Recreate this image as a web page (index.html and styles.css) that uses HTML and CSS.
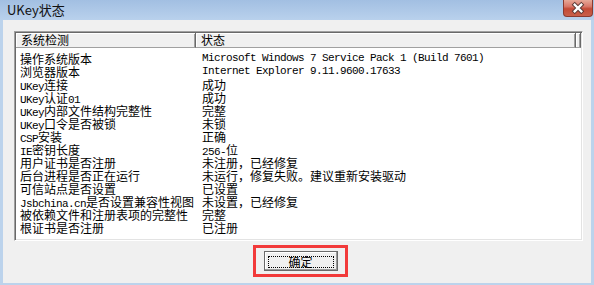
FILE: index.html
```html
<!DOCTYPE html>
<html lang="zh-CN">
<head>
<meta charset="utf-8">
<title>UKey状态</title>
<link rel="stylesheet" href="styles.css">
</head>
<body>
<div class="window">
  <div class="titlebar">
    <div class="title">UKey状态</div>
    <div class="close">
      <svg width="30" height="16" viewBox="0 0 30 16">
        <path d="M11.5 4.5 L18.5 11.5 M18.5 4.5 L11.5 11.5" stroke="#5a3a36" stroke-width="4.6" stroke-linecap="square"/>
        <path d="M11.5 4.5 L18.5 11.5 M18.5 4.5 L11.5 11.5" stroke="#ffffff" stroke-width="2.6" stroke-linecap="square"/>
      </svg>
    </div>
  </div>
  <div class="frame">
    <div class="list">
      <div class="header">
        <div class="hcell c1">系统检测</div>
        <div class="hcell c2">状态</div>
        <div class="hcell c3"></div>
      </div>
      <div class="rows">
        <div class="row"><span>操作系统版本</span><span class="m">Microsoft Windows 7 Service Pack 1 (Build 7601)</span></div>
        <div class="row"><span>浏览器版本</span><span class="m">Internet Explorer 9.11.9600.17633</span></div>
        <div class="row"><span><span class="m">UKey</span>连接</span><span>成功</span></div>
        <div class="row"><span><span class="m">UKey</span>认证<span class="m">01</span></span><span>成功</span></div>
        <div class="row"><span><span class="m">UKey</span>内部文件结构完整性</span><span>完整</span></div>
        <div class="row"><span><span class="m">UKey</span>口令是否被锁</span><span>未锁</span></div>
        <div class="row"><span><span class="m">CSP</span>安装</span><span>正确</span></div>
        <div class="row"><span><span class="m">IE</span>密钥长度</span><span><span class="m">256-</span>位</span></div>
        <div class="row"><span>用户证书是否注册</span><span>未注册，已经修复</span></div>
        <div class="row"><span>后台进程是否正在运行</span><span>未运行，修复失败。建议重新安装驱动</span></div>
        <div class="row"><span>可信站点是否设置</span><span>已设置</span></div>
        <div class="row"><span><span class="m">Jsbchina.cn</span>是否设置兼容性视图</span><span>未设置，已经修复</span></div>
        <div class="row"><span>被依赖文件和注册表项的完整性</span><span>完整</span></div>
        <div class="row"><span>根证书是否注册</span><span>已注册</span></div>
      </div>
    </div>
    <div class="actions">
      <div class="highlight">
        <button class="btn" type="button"><span class="focus">确定</span></button>
      </div>
    </div>
  </div>
</div>
</body>
</html>
```
FILE: styles.css
```css
* { box-sizing: border-box; margin: 0; padding: 0; }
html, body { width: 594px; height: 285px; overflow: hidden; }
body {
  font-family: "Noto Sans CJK SC", sans-serif;
  font-size: 12px;
  color: #000;
  background: #f0f0f0;
}
.window {
  width: 594px;
  height: 285px;
  display: flex;
  flex-direction: column;
}
.titlebar {
  height: 20px;
  flex: none;
  display: flex;
  justify-content: space-between;
  align-items: flex-start;
  background: linear-gradient(to bottom, #a2bfe2, #b9d1ec);
}
.title {
  padding-left: 7px;
  line-height: 20px;
  font-size: 13px;
  color: #111;
}
.close {
  width: 30px;
  height: 17px;
  margin-right: 1px;
  border: 1px solid #8a3a30;
  border-top: none;
  border-radius: 0 0 4px 4px;
  background: linear-gradient(to bottom, #e7a898 0%, #d9786a 40%, #c44a36 55%, #c9604a 100%);
  display: flex;
  align-items: center;
  justify-content: center;
}
.close svg { display: block; }
.frame {
  flex: 1;
  display: flex;
  flex-direction: column;
  background: #f0f0f0;
  border-left: 3px solid #bcd3ec;
  border-right: 3px solid #bcd3ec;
  border-bottom: 2px solid #bcd3ec;
  padding: 11px 8px 0 11px;
}
.list {
  height: 210px;
  flex: none;
  background: #fff;
  border: 1px solid;
  border-color: #a0a0a0 #ffffff #ffffff #a0a0a0;
  box-shadow: inset 1px 1px #696969, inset -1px -1px #e3e3e3;
  padding: 1px;
  display: flex;
  flex-direction: column;
}
.header {
  display: flex;
  height: 15px;
  flex: none;
  background: #f0f0f0;
}
.hcell {
  height: 15px;
  line-height: 13px;
  padding-left: 5px;
  background: #f0f0f0;
  border-right: 1px solid #696969;
  border-bottom: 1px solid #a0a0a0;
  box-shadow: inset 1px 1px #ffffff, inset -1px 0 #a0a0a0;
  white-space: nowrap;
}
.c1 { width: 180px; }
.c2 { width: 380px; }
.c3 { flex: 1; padding: 0; }
.rows {
  padding-top: 4px;
  display: flex;
  flex-direction: column;
}
.row {
  display: grid;
  grid-template-columns: 182px 1fr;
  padding-left: 4px;
  height: 13px;
  line-height: 13px;
  white-space: nowrap;
}
.m {
  font-family: "Liberation Mono", monospace;
  font-size: 11px;
  letter-spacing: -0.6px;
}
.actions {
  margin-top: 4px;
  display: flex;
  justify-content: center;
  padding-left: 4px;
}
.highlight {
  width: 95px;
  height: 32px;
  border: 3px solid #f23a3a;
  display: flex;
  align-items: center;
  justify-content: center;
}
.btn {
  appearance: none;
  width: 74px;
  height: 20px;
  background: #f0f0f0;
  border: 1px solid #6a6a6a;
  box-shadow: inset -1px -1px #9a9a9a, inset 1px 1px #ffffff;
  font-family: "Noto Sans CJK SC", sans-serif;
  font-size: 12px;
  color: #000;
  display: flex;
  padding: 4px 3px 2px 3px;
}
.focus {
  flex: 1;
  border: 1px dotted #000;
  line-height: 10px;
  text-align: center;
}
```
